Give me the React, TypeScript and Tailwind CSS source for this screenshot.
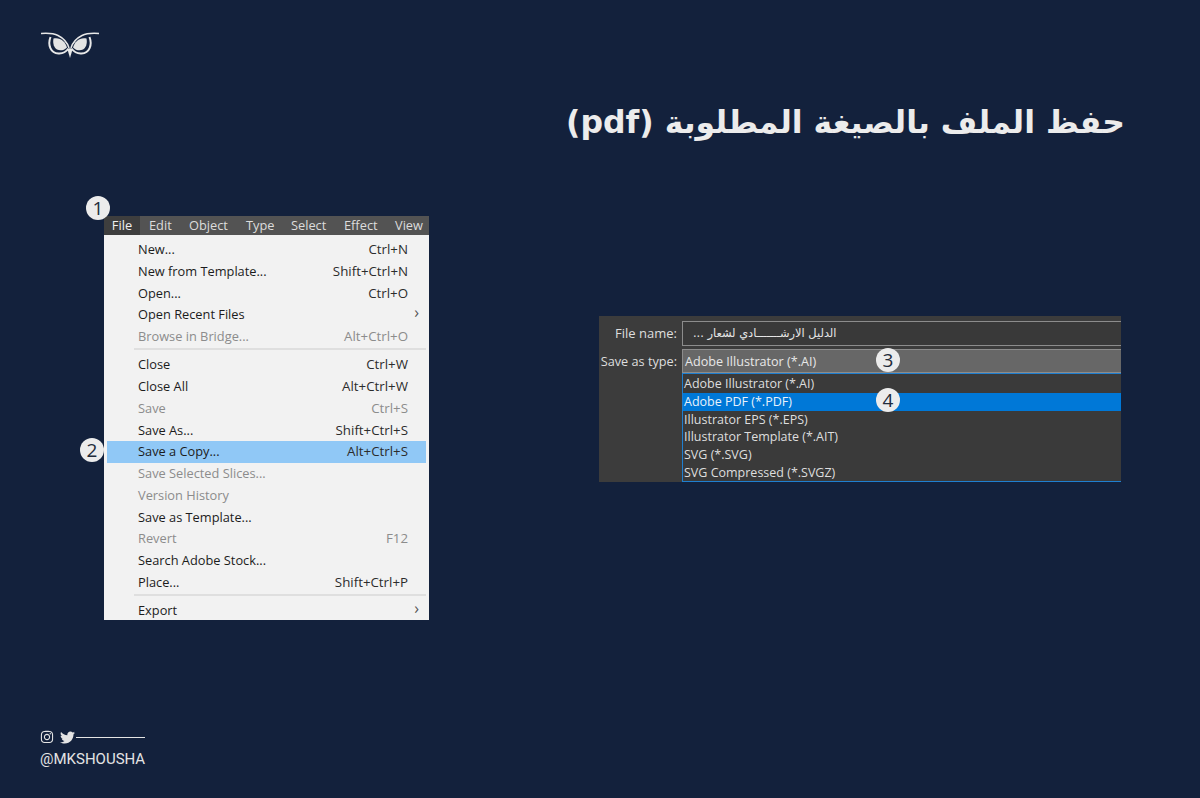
import { FaInstagram, FaTwitter } from "react-icons/fa"

type MenuRow = { label: string; keys?: string; off?: boolean; arrow?: boolean; active?: boolean; sep?: boolean }

const menuBar = [
  { label: "File", w: "w-[36px]", on: true },
  { label: "Edit", w: "w-[40px]" },
  { label: "Object", w: "w-[57px]" },
  { label: "Type", w: "w-[45px]" },
  { label: "Select", w: "w-[53px]" },
  { label: "Effect", w: "w-[51px]" },
  { label: "View", w: "w-[43px]" },
]

const rows: MenuRow[] = [
  { label: "New...", keys: "Ctrl+N" },
  { label: "New from Template...", keys: "Shift+Ctrl+N" },
  { label: "Open...", keys: "Ctrl+O" },
  { label: "Open Recent Files", arrow: true },
  { label: "Browse in Bridge...", keys: "Alt+Ctrl+O", off: true },
  { label: "", sep: true },
  { label: "Close", keys: "Ctrl+W" },
  { label: "Close All", keys: "Alt+Ctrl+W" },
  { label: "Save", keys: "Ctrl+S", off: true },
  { label: "Save As...", keys: "Shift+Ctrl+S" },
  { label: "Save a Copy...", keys: "Alt+Ctrl+S", active: true },
  { label: "Save Selected Slices...", off: true },
  { label: "Version History", off: true },
  { label: "Save as Template..." },
  { label: "Revert", keys: "F12", off: true },
  { label: "Search Adobe Stock..." },
  { label: "Place...", keys: "Shift+Ctrl+P" },
  { label: "", sep: true },
  { label: "Export", arrow: true },
]

const fileTypes = [
  "Adobe Illustrator (*.AI)",
  "Adobe PDF (*.PDF)",
  "Illustrator EPS (*.EPS)",
  "Illustrator Template (*.AIT)",
  "SVG (*.SVG)",
  "SVG Compressed (*.SVGZ)",
]

function Badge({ n, className }: { n: number; className: string }) {
  return (
    <div
      className={`absolute w-[24px] h-[24px] rounded-full bg-[#ececec] text-[#222b3a] flex items-center justify-center text-[19px] leading-none font-['Open_Sans',sans-serif] ${className}`}
    >
      {n}
    </div>
  )
}

function OwlLogo() {
  return (
    <svg width="58" height="28" viewBox="0 0 58 28" fill="none">
      <path d="M0 2.5C7 2 13 2.5 17 4.5C23 7.5 26.5 12 28 17" stroke="#e8e8e8" strokeWidth="1.5" fill="none" />
      <path d="M58 2.5C51 2 45 2.5 41 4.5C35 7.5 31.5 12 30 17" stroke="#e8e8e8" strokeWidth="1.5" fill="none" />
      <path d="M9.5 6C6.5 14 9.5 22 17.5 22.5C21.5 22.8 25 21 27.5 17.5" stroke="#e8e8e8" strokeWidth="2" fill="none" />
      <path d="M48.5 6C51.5 14 48.5 22 40.5 22.5C36.5 22.8 33 21 30.5 17.5" stroke="#e8e8e8" strokeWidth="2" fill="none" />
      <path d="M12.5 7.5C19 6 24.5 10.5 26 16.5C23 19.5 19 20 16 18.5C13 17 11.5 12 12.5 7.5Z" fill="#e4e4e4" />
      <path d="M45.5 7.5C39 6 33.5 10.5 32 16.5C35 19.5 39 20 42 18.5C45 17 46.5 12 45.5 7.5Z" fill="#e4e4e4" />
      <path d="M26.5 18.5L29 17L31.5 18.5L29 27Z" fill="#e8e8e8" />
    </svg>
  )
}

export default function App() {
  return (
    <div className="relative w-full h-[798px] bg-[#13213c] flex flex-col overflow-hidden">

      {/* LOGO */}
      <div className="pl-[41px] pt-[31px] h-[57px]">
        <OwlLogo />
      </div>

      {/* TITLE */}
      <h1
        dir="rtl"
        className="mt-[39px] pr-[75px] h-[52px] leading-[52px] text-[31.5px] font-bold text-[#ececec] font-['DejaVu_Sans',sans-serif]"
      >
        حفظ الملف بالصيغة المطلوبة (pdf)
      </h1>

      <div className="mt-[68px] flex items-start">

        {/* MENU */}
        <div className="relative ml-[104px] w-[325px] h-[404px] bg-[#f2f2f2] font-['Open_Sans',sans-serif] text-[12.8px]">
          <Badge n={1} className="left-[-18px] top-[-20px]" />
          <Badge n={2} className="left-[-24px] top-[222px]" />

          <div className="flex h-[19px] bg-[#535353] text-[#dcdcdc]">
            {menuBar.map((m) => (
              <div
                key={m.label}
                className={`${m.w} h-full leading-[19px] ${m.on ? "bg-[#3e3e3e] text-center text-[#efefef]" : "pl-[9px]"}`}
              >
                {m.label}
              </div>
            ))}
          </div>

          <div className="pt-[4px] px-[3px]">
            {rows.map((r, i) =>
              r.sep ? (
                <div key={i} className="h-[6.5px] ml-[27px] flex items-start">
                  <div className="w-full h-[2px] bg-[#dfdfdf]" />
                </div>
              ) : (
                <div
                  key={i}
                  className={`relative h-[21.75px] leading-[21.75px] pl-[31px] pr-[18px] flex justify-between ${r.active ? "bg-[#90c8f6]" : ""} ${r.off ? "text-[#8c8c8c]" : "text-[#1c1c1c]"}`}
                >
                  <span>{r.label}</span>
                  {r.keys && (
                    <span className={`text-[13.3px] ${r.off ? "text-[#8c8c8c]" : "text-[#2c2c2c]"}`}>{r.keys}</span>
                  )}
                  {r.arrow && <span className="absolute right-[7px] top-[-2px] text-[#555] text-[16px]">›</span>}
                </div>
              )
            )}
          </div>
        </div>

        {/* SAVE DIALOG */}
        <div className="relative ml-[170px] mt-[100px] w-[522px] h-[166px] bg-[#3c3c3c] font-['Open_Sans',sans-serif] text-[13px] text-[#dedede] pt-[5px]">
          <Badge n={3} className="left-[277px] top-[32px]" />
          <Badge n={4} className="left-[277px] top-[72px]" />

          <div className="flex items-center h-[25px]">
            <div className="w-[78px] text-right whitespace-nowrap">File name:</div>
            <div className="ml-[5px] flex-1 h-full border border-r-0 border-[#8c8c8c] bg-[#393939] flex items-center pl-[10px]">
              <span dir="rtl" className="text-[11.4px] text-[#e6e6e6] font-['DejaVu_Sans',sans-serif]">
                الدليل الارشـــــــادي لشعار ...
              </span>
            </div>
          </div>

          <div className="flex items-center h-[24px] mt-[3px]">
            <div className="w-[78px] flex justify-end whitespace-nowrap text-[12.7px] pt-[1px]">Save as type:</div>
            <div className="ml-[5px] flex-1 h-full border border-r-0 border-[#8c8c8c] bg-[#676767] flex items-center pl-[2px] pt-[2px] text-[12.6px] text-[#e8e8e8]">
              Adobe Illustrator (*.AI)
            </div>
          </div>

          <div className="ml-[83px] h-[109px] border-l border-b border-t border-[#1f7fd0] bg-[#3a3a3a] text-[12.5px] pt-[1px]">
            {fileTypes.map((t) => (
              <div
                key={t}
                className={`h-[17.8px] leading-[18.8px] pl-[1px] ${t.startsWith("Adobe PDF") ? "bg-[#0078d7] text-[#e8f2fb]" : ""}`}
              >
                {t}
              </div>
            ))}
          </div>
        </div>

      </div>

      {/* FOOTER */}
      <div className="mt-auto ml-[40px] pb-[29px] w-[105px] text-[#e4e4e4]">
        <div className="flex items-center h-[14px]">
          <FaInstagram className="w-[14px] h-[14px]" />
          <FaTwitter className="ml-[5px] w-[17px] h-[15px]" />
          <div className="flex-1 h-px bg-[#e4e4e4]" />
        </div>
        <div className="mt-[5px] text-[15px] leading-[20px] font-['Roboto',sans-serif]">@MKSHOUSHA</div>
      </div>

    </div>
  )
}
